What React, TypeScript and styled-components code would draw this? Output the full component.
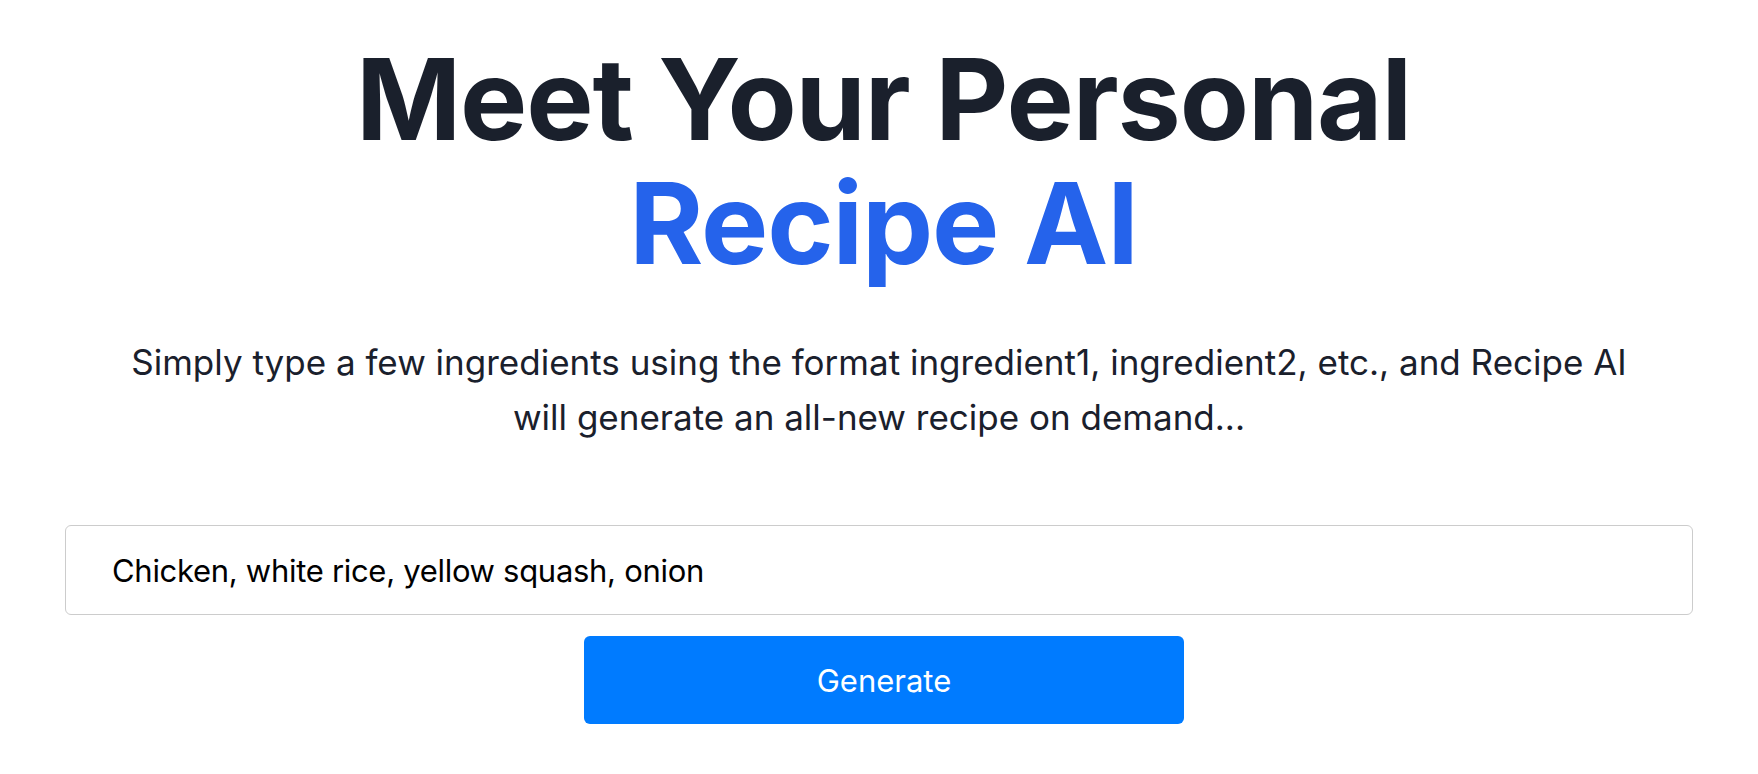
import { useState } from "react";
import styled, { createGlobalStyle } from "styled-components";

const GlobalStyle = createGlobalStyle`
  html, body {
    margin: 0;
    padding: 0;
    background: #ffffff;
  }

  body {
    font-family: Inter, "Noto Sans", sans-serif;
    -webkit-font-smoothing: antialiased;
  }
`;

export default function App() {
  const [ingredients, setIngredients] = useState(
    "Chicken, white rice, yellow squash, onion"
  );

  return (
    <>
      <GlobalStyle />
      <Page>
        <Title>
          Meet Your Personal
          <Highlight>Recipe AI</Highlight>
        </Title>

        <Lead>
          Simply type a few ingredients using the format ingredient1,
          ingredient2, etc., and Recipe AI will generate an all-new recipe on
          demand...
        </Lead>

        <Form onSubmit={(e) => e.preventDefault()}>
          <IngredientsInput
            type="text"
            value={ingredients}
            onChange={(e) => setIngredients(e.target.value)}
          />
          <GenerateButton type="submit">Generate</GenerateButton>
        </Form>
      </Page>
    </>
  );
}

const Page = styled.main`
  display: flex;
  flex-direction: column;
  align-items: center;
  padding-top: 37px;
  text-align: center;
`;

const Title = styled.h1`
  margin: 0;
  padding-left: 9px;
  font-family: Inter, sans-serif;
  font-size: 113px;
  font-weight: 700;
  line-height: 124px;
  letter-spacing: -0.01em;
  color: #1a202c;
`;

const Highlight = styled.span`
  display: block;
  color: #2563eb;
`;

const Lead = styled.p`
  margin: 50px 0 0;
  max-width: 1540px;
  font-family: Inter, sans-serif;
  font-size: 35px;
  font-weight: 400;
  line-height: 55px;
  color: #1a202c;
`;

const Form = styled.form`
  display: flex;
  flex-direction: column;
  align-items: center;
  gap: 21px;
  box-sizing: border-box;
  width: 100%;
  margin-top: 80px;
  padding: 0 65px;
`;

const IngredientsInput = styled.input`
  box-sizing: border-box;
  width: 100%;
  height: 90px;
  padding: 0 46px;
  border: 1px solid #cccccc;
  border-radius: 6px;
  font-family: Inter, sans-serif;
  font-size: 31px;
  letter-spacing: -0.3px;
  color: #000000;
  outline: none;
`;

const GenerateButton = styled.button`
  width: 600px;
  height: 88px;
  margin-left: 10px;
  border: none;
  border-radius: 6px;
  background: #007bff;
  color: #ffffff;
  font-family: Inter, sans-serif;
  font-size: 31px;
  font-weight: 400;
  cursor: pointer;
`;
